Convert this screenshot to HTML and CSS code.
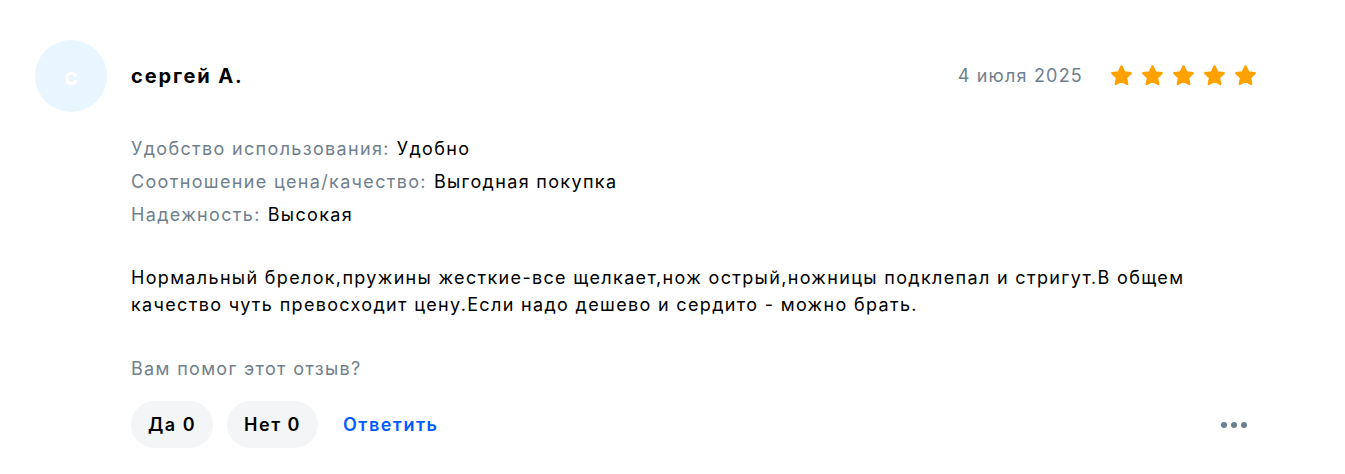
FILE: index.html
```html
<!DOCTYPE html>
<html lang="ru">
<head>
<meta charset="utf-8">
<title>Отзыв</title>
<link rel="stylesheet" href="styles.css">
</head>
<body>
<article class="review">
  <div class="avatar">с</div>
  <div class="review-main">
    <header class="review-head">
      <div class="author">сергей А.</div>
      <div class="meta">
        <span class="date">4 июля 2025</span>
        <div class="stars" aria-label="5 из 5">
          <svg viewBox="0 0 24 24" class="star"><path d="M12 3.2l2.7 5.7 6.2.8-4.6 4.3 1.2 6.2L12 17.1l-5.5 3.1 1.2-6.2-4.6-4.3 6.2-.8z"/></svg>
          <svg viewBox="0 0 24 24" class="star"><path d="M12 3.2l2.7 5.7 6.2.8-4.6 4.3 1.2 6.2L12 17.1l-5.5 3.1 1.2-6.2-4.6-4.3 6.2-.8z"/></svg>
          <svg viewBox="0 0 24 24" class="star"><path d="M12 3.2l2.7 5.7 6.2.8-4.6 4.3 1.2 6.2L12 17.1l-5.5 3.1 1.2-6.2-4.6-4.3 6.2-.8z"/></svg>
          <svg viewBox="0 0 24 24" class="star"><path d="M12 3.2l2.7 5.7 6.2.8-4.6 4.3 1.2 6.2L12 17.1l-5.5 3.1 1.2-6.2-4.6-4.3 6.2-.8z"/></svg>
          <svg viewBox="0 0 24 24" class="star"><path d="M12 3.2l2.7 5.7 6.2.8-4.6 4.3 1.2 6.2L12 17.1l-5.5 3.1 1.2-6.2-4.6-4.3 6.2-.8z"/></svg>
        </div>
      </div>
    </header>

    <dl class="props">
      <div class="prop"><dt>Удобство использования:</dt><dd>Удобно</dd></div>
      <div class="prop"><dt>Соотношение цена/качество:</dt><dd>Выгодная покупка</dd></div>
      <div class="prop"><dt>Надежность:</dt><dd>Высокая</dd></div>
    </dl>

    <p class="text">Нормальный брелок,пружины жесткие-все щелкает,нож острый,ножницы подклепал и стригут.В общем качество чуть превосходит цену.Если надо дешево и сердито - можно брать.</p>

    <div class="question">Вам помог этот отзыв?</div>

    <div class="actions">
      <button class="vote">Да 0</button>
      <button class="vote">Нет 0</button>
      <button class="reply">Ответить</button>
      <button class="more" aria-label="Ещё"><span></span><span></span><span></span></button>
    </div>
  </div>
</article>
</body>
</html>
```

FILE: styles.css
```css
* { box-sizing: border-box; }

body {
  margin: 0;
  background: #fff;
  font-family: Inter, "Noto Sans", sans-serif;
  letter-spacing: 1.33px;
  color: #001a34;
}

.review {
  display: flex;
  gap: 24px;
  padding: 40px 87px 0 35px;
}

.avatar {
  flex: 0 0 72px;
  width: 72px;
  height: 72px;
  border-radius: 50%;
  background: #e9f5ff;
  color: #fff;
  font-size: 24px;
  font-weight: 700;
  letter-spacing: 0;
  display: flex;
  align-items: center;
  justify-content: center;
}

.review-main {
  flex: 1;
  min-width: 0;
}

.review-head {
  display: flex;
  align-items: center;
  justify-content: space-between;
  height: 72px;
}

.author {
  font-size: 20px;
  font-weight: 700;
  letter-spacing: 1.9px;
  color: #000;
}

.meta {
  display: flex;
  align-items: center;
  gap: 26px;
  margin-top: -2px;
}

.date {
  font-size: 18px;
  letter-spacing: 1.2px;
  color: #707f8d;
}

.stars {
  display: flex;
  gap: 6px;
}

/* rounded star points: fill plus a same-coloured round-joined stroke */
.star {
  width: 25px;
  height: 25px;
  fill: #ffa200;
  stroke: #ffa200;
  stroke-width: 2.2;
  stroke-linejoin: round;
}

.props {
  margin: 20px 0 0;
}

.prop {
  display: flex;
  gap: 7px;
  font-size: 18px;
  line-height: 33px;
}

.prop dt { color: #707f8d; }
.prop dd { margin: 0; color: #000; }

.text {
  margin: 33px 0 0;
  max-width: 1090px;
  font-size: 18px;
  line-height: 27px;
  color: #000;
}

.question {
  margin-top: 40px;
  font-size: 18px;
  color: #707f8d;
}

.actions {
  display: flex;
  align-items: center;
  gap: 14px;
  margin-top: 22px;
}

.actions button {
  font-family: inherit;
  letter-spacing: 1.5px;
  border: 0;
  cursor: pointer;
}

.vote {
  height: 47px;
  padding: 0 17px;
  border-radius: 24px;
  background: #f3f5f7;
  font-size: 18px;
  font-weight: 600;
  color: #000;
}

.reply {
  background: none;
  padding: 0 11px;
  font-size: 18px;
  font-weight: 600;
  color: #005bff;
}

.more {
  margin-left: auto;
  margin-right: 11px;
  background: none;
  display: flex;
  gap: 4px;
  padding: 0;
}

.more span {
  width: 6px;
  height: 6px;
  border-radius: 50%;
  background: #6b7f92;
}
```
